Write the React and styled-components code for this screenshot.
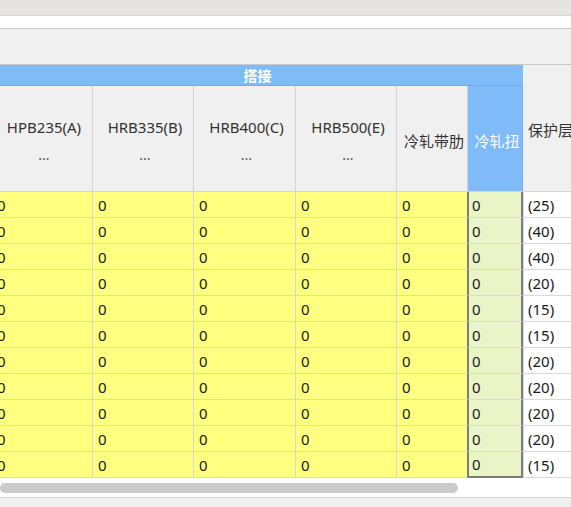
import React from "react";
import styled, { createGlobalStyle, css } from "styled-components";

const GlobalStyle = createGlobalStyle`
  html, body { margin: 0; padding: 0; background: #f0f0f0; overflow: hidden; }
  body { font-family: "Noto Sans", "Noto Sans CJK SC", sans-serif; }
`;

const Page = styled.div`
  width: 571px;
  height: 507px;
  display: flex;
  flex-direction: column;
  overflow: hidden;
`;

const TitleBar = styled.div`
  height: 15px;
  flex: none;
  background: #e6e4e1;
  border-bottom: 1px solid #d8d8d8;
`;

const InputStrip = styled.div`
  height: 12px;
  flex: none;
  background: #ffffff;
  border-bottom: 1px solid #c9c9c9;
`;

const ToolPanel = styled.div`
  height: 35px;
  flex: none;
  background: #f0f0f0;
  border-bottom: 1px solid #c9c9c9;
`;

const GridViewport = styled.div`
  flex: none;
  background: #ffffff;
  overflow: hidden;
`;

const Grid = styled.div`
  display: grid;
  grid-template-columns: 101px 101px 102px 101px 71px 55px 200px;
  grid-template-rows: 21px 106px repeat(11, 26px);
  margin-left: -8px;
  width: max-content;
  font-size: 15px;
`;

const Band = styled.div`
  grid-column: 1 / 7;
  grid-row: 1;
  background: #80bbf9;
  border-bottom: 1px solid #6fabee;
  color: #ffffff;
  font-family: "Noto Sans CJK SC", sans-serif;
  font-size: 14px;
  font-weight: 700;
  display: flex;
  align-items: center;
  justify-content: center;
  box-sizing: border-box;
`;

const HeadCell = styled.div`
  box-sizing: border-box;
  grid-row: 2;
  background: ${(p) => (p.$active ? "#80bbf9" : "#f0f0f0")};
  color: ${(p) => (p.$active ? "#ffffff" : "#333333")};
  border-right: 1px solid ${(p) => (p.$active ? "#6fabee" : "#d4d4d4")};
  border-bottom: 1px solid #d4d4d4;
  display: flex;
  flex-direction: column;
  align-items: center;
  justify-content: center;
  padding: 5px 0 0 4px;
  line-height: 23px;
  white-space: nowrap;
  font-family: "Noto Sans", "Noto Sans CJK SC", sans-serif;
`;

const SideHead = styled(HeadCell)`
  grid-row: 1 / 3;
  align-items: flex-start;
  justify-content: flex-start;
  padding: 54px 0 0 5px;
  border-right: none;
  overflow: hidden;
`;

const Dots = styled.span`
  line-height: 23px;
  margin-top: 4px;
  font-size: 14px;
  color: #555;
`;

const Cell = styled.div`
  box-sizing: border-box;
  background: ${(p) => (p.$plain ? "#ffffff" : "#ffff80")};
  border-right: 1px solid #d6d6d6;
  border-bottom: 1px solid #d9d9d9;
  display: flex;
  align-items: center;
  padding-left: 5px;
  color: #1a1a1a;
  font-size: 15px;
  ${(p) =>
    p.$plain &&
    css`
      border-right: none;
      border-left: 1px solid #d9d9d9;
      padding-left: 4px;
    `}
  ${(p) =>
    p.$selected &&
    css`
      background: #eaf5c7;
      border-left: 2px solid #7d7d7d;
      border-right: 2px solid #7d7d7d;
      padding-left: 3px;
      margin-left: -1px;
    `}
  ${(p) =>
    p.$selected &&
    p.$last &&
    css`
      border-bottom: 2px solid #7d7d7d;
    `}
`;

const ScrollTrack = styled.div`
  height: 19px;
  box-sizing: border-box;
  padding-top: 5px;
  background: #ffffff;
`;

const ScrollThumb = styled.div`
  width: 458px;
  height: 10px;
  border-radius: 5px;
  background: #cbcbcb;
`;

const Footer = styled.div`
  flex: 1;
  background: #f0f0f0;
  border-top: 1px solid #d6d6d6;
`;

const headers = [
  { top: "HPB235(A)", dots: true },
  { top: "HRB335(B)", dots: true },
  { top: "HRB400(C)", dots: true },
  { top: "HRB500(E)", dots: true },
  { top: "冷轧带肋" },
  { top: "冷轧扭", active: true },
];

const cover = ["(25)", "(40)", "(40)", "(20)", "(15)", "(15)", "(20)", "(20)", "(20)", "(20)", "(15)"];

export default function App() {
  return (
    <>
      <GlobalStyle />
      <Page>
        <TitleBar />
        <InputStrip />
        <ToolPanel />
        <GridViewport>
          <Grid>
            <Band>搭接</Band>
            {headers.map((h) => (
              <HeadCell key={h.top} $active={h.active}>
                <span>{h.top}</span>
                {h.dots && <Dots>...</Dots>}
              </HeadCell>
            ))}
            <SideHead>
              <span>保护层</span>
            </SideHead>
            {cover.map((c, r) => (
              <React.Fragment key={r}>
                {[0, 1, 2, 3, 4].map((i) => (
                  <Cell key={i}>0</Cell>
                ))}
                <Cell $selected $last={r === cover.length - 1}>0</Cell>
                <Cell $plain>{c}</Cell>
              </React.Fragment>
            ))}
          </Grid>
          <ScrollTrack>
            <ScrollThumb />
          </ScrollTrack>
        </GridViewport>
        <Footer />
      </Page>
    </>
  );
}
